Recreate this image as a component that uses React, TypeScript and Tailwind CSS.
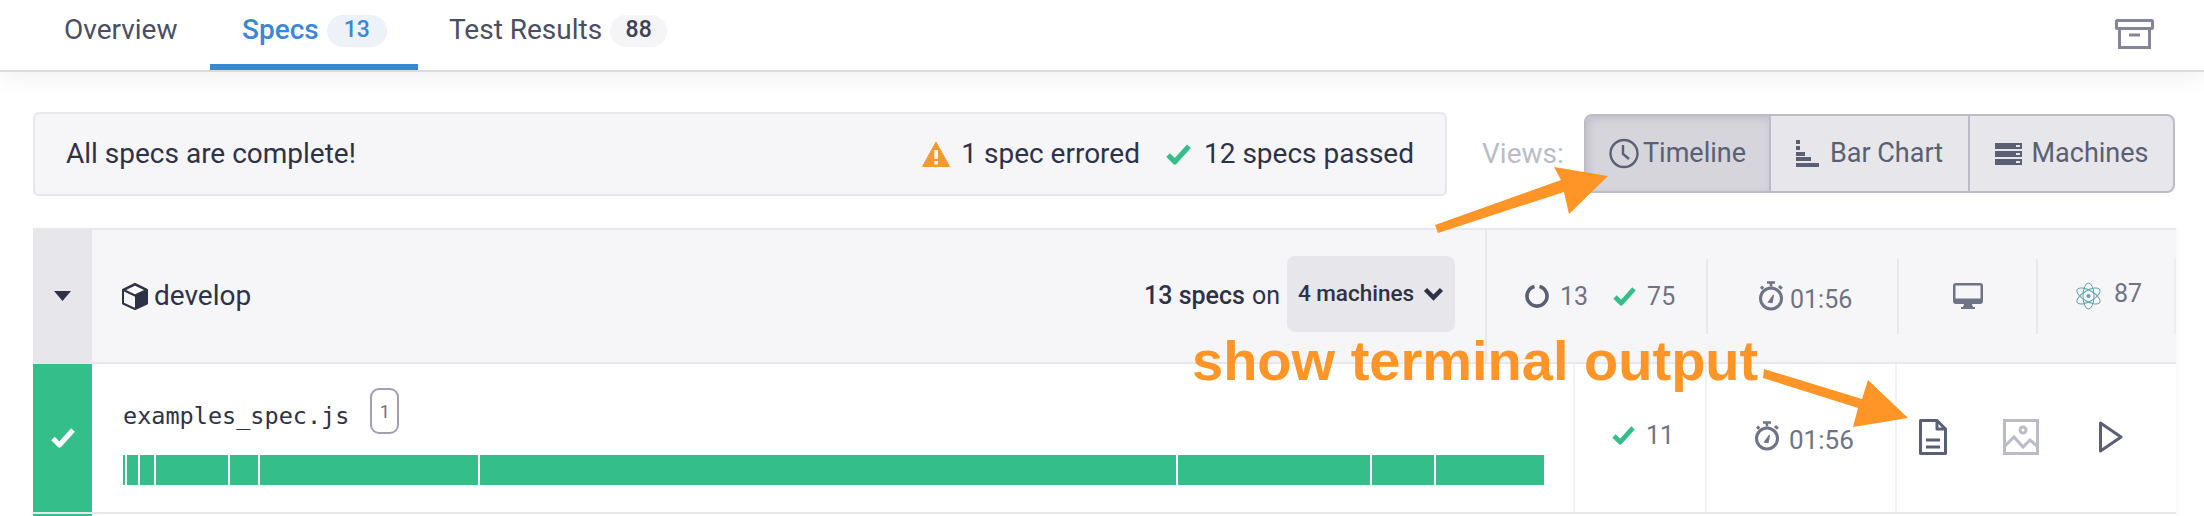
const green = '#34bf8a';

function Check({ className, color = green }: { className?: string; color?: string }) {
  return (
    <svg className={className} viewBox="0 0 24 20" fill="none">
      <path d="M2 10.500 8.500 17 22 2" stroke={color} strokeWidth="5" strokeLinejoin="round" />
    </svg>
  );
}

function Stopwatch({ className }: { className?: string }) {
  return (
    <svg className={className} viewBox="0 0 26 30" fill="none">
      <path d="M9 1.500h8M13 1.500v4" stroke="#6f7386" strokeWidth="2.600" />
      <path d="m21 5 2.800 2.800" stroke="#6f7386" strokeWidth="3" />
      <path d="m3 7.800 2.200-2.200" stroke="#6f7386" strokeWidth="3" />
      <circle cx="13" cy="17.500" r="10.500" stroke="#6f7386" strokeWidth="3" />
      <path d="m10.500 21 5-7-1.500 7.500z" fill="#6f7386" stroke="#6f7386" strokeWidth="1.200" />
    </svg>
  );
}

function StatText({ children, className = '' }: { children: React.ReactNode; className?: string }) {
  return <span className={`leading-none text-[#6f7386] ${className}`}>{children}</span>;
}

function ViewButton({ active, icon, label, width, gap }: { active?: boolean; icon: React.ReactNode; label: string; width: string; gap: string }) {
  return (
    <div className={`${width} ${gap} flex items-center justify-center h-full border-r-2 border-[#bcbcc7] last:border-r-0 text-[27px] text-[#5b5f73] ${active ? 'bg-[#d5d5db] shadow-[inset_3px_3px_8px_rgba(0,0,0,0.1)]' : ''}`}>
      {icon}
      <span>{label}</span>
    </div>
  );
}

const segments = [
  'w-[2px]', 'w-[11px]', 'w-[14px]', 'w-[72px]', 'w-[28px]', 'w-[218px]',
  'w-[696px]', 'w-[192px]', 'w-[62px]', 'w-[108px]',
];

export default function App() {
  return (
    <div className="relative w-[2204px] h-[516px] overflow-hidden bg-white font-['Roboto',sans-serif]">
      <nav className="relative h-[72px] flex border-b-2 border-[#dadae1] shadow-[0_6px_22px_rgba(0,0,0,0.06)] text-[#4a4e62] text-[28px]">
        <div className="flex items-center w-[210px] h-[70px] pl-[64px] pb-[11px]">Overview</div>
        <div className="flex items-center gap-[8px] w-[208px] h-[70px] pl-[32px] pb-[5px] border-b-[6px] border-[#3a87d6] text-[#3a87d6] font-medium">
          <span>Specs</span>
          <span className="w-[60px] h-[32px] mt-[2px] flex items-center justify-center rounded-full bg-[#edf2f9] text-[23px]">13</span>
        </div>
        <div className="flex items-center gap-[8px] pl-[31px] pb-[11px]">
          <span>Test Results</span>
          <span className="w-[57px] h-[32px] mt-[2px] flex items-center justify-center rounded-full bg-[#f5f5f8] text-[23px] font-medium text-[#3d4156]">88</span>
        </div>
        <svg className="ml-auto mr-[50px] mt-[19px] w-[39px] h-[30px]" viewBox="0 0 39 30" fill="none" stroke="#85859a" strokeWidth="3">
          <rect x="1.500" y="1.500" width="36" height="8" rx="1" />
          <path d="M4.500 10v18.500h30V10" />
          <path d="M14 16h11" />
        </svg>
      </nav>

      <main className="pl-[33px] pr-[28px] pt-[40px]">
        <div className="flex items-start">
          <div className="w-[1414px] h-[84px] flex items-center pl-[31px] pr-[31px] rounded-[6px] border-2 border-[#e7e7ec] bg-[#f6f6f9] text-[28px] text-[#2e3247]">
            <span>All specs are complete!</span>
            <svg className="ml-auto w-[28px] h-[26px]" viewBox="0 0 28 26">
              <path d="M14 1 27.500 25.500H.5z" fill="#f7972f" stroke="#f7972f" strokeLinejoin="round" />
              <rect x="12.300" y="9" width="3.600" height="9" fill="#fff" />
              <rect x="12.300" y="20" width="3.600" height="3.400" fill="#fff" />
            </svg>
            <span className="ml-[11px]">1 spec errored</span>
            <Check className="ml-[26px] w-[25px] h-[21px]" />
            <span className="ml-[13px]">12 specs passed</span>
          </div>
          <span className="ml-[35px] mt-[26px] w-[82px] text-[28px] leading-[32px] text-[#bcbcc7]">Views:</span>
          <div className="ml-[20px] mt-[2px] flex w-[591px] h-[79px] overflow-hidden rounded-[8px] border-2 border-[#bcbcc7] bg-[#e6e6eb]">
            <ViewButton
              active
              width="w-[185px]"
              gap="gap-[4px]"
              label="Timeline"
              icon={
                <svg className="w-[30px] h-[31px]" viewBox="0 0 30 31" fill="none" stroke="#5b5f73" strokeWidth="2.400">
                  <circle cx="15" cy="15.500" r="13.500" />
                  <path d="M14 7v9l6 5" />
                </svg>
              }
            />
            <ViewButton
              width="w-[199px]"
              gap="gap-[11px]"
              label="Bar Chart"
              icon={
                <svg className="w-[23px] h-[27px]" viewBox="0 0 23 27" fill="#5b5f73">
                  <rect x="0" y="0" width="4" height="4" />
                  <rect x="0" y="6" width="4" height="4" />
                  <rect x="0" y="12" width="9" height="4" />
                  <rect x="0" y="17" width="15" height="4" />
                  <rect x="0" y="23" width="23" height="4" />
                </svg>
              }
            />
            <ViewButton
              width="flex-1"
              gap="gap-[10px]"
              label="Machines"
              icon={
                <svg className="w-[27px] h-[22px]" viewBox="0 0 27 22" fill="#5b5f73">
                  <path fillRule="evenodd" d="M0 0h27v6H0zM21 2v2h4V2zM0 8h27v6H0zM21 10v2h4v-2zM0 16h27v6H0zM21 18v2h4v-2z" />
                </svg>
              }
            />
          </div>
        </div>

        <section className="mt-[32px] w-[2143px] border-t-2 border-[#e7e7ec] shadow-[2px_0_4px_rgba(0,0,0,0.03)]">
          <div className="flex h-[134px] bg-[#f6f6f9] border-b-2 border-[#e7e7ec]">
            <div className="w-[59px] flex items-center justify-center bg-[#e6e6eb]">
              <svg className="w-[17px] h-[10px]" viewBox="0 0 17 10">
                <path d="M0 0h17L8.500 10z" fill="#2e3247" />
              </svg>
            </div>
            <div className="w-[1395px] flex items-center pl-[30px] pr-[30px] text-[28px] text-[#2e3247] border-r-2 border-[#e7e7ec]">
              <svg className="w-[26px] h-[27px] mr-[6px]" viewBox="0 0 26 27" fill="none">
                <path d="M13 1 25 7v13.500L13 26 1 20.500V7z" stroke="#2e3247" strokeWidth="2" strokeLinejoin="round" />
                <path d="M1.500 7 13 12.500 24.500 7 13 1.500z" fill="#fff" stroke="#2e3247" strokeWidth="2" strokeLinejoin="round" />
                <path d="M13 12.500V26l12-5.500V7z" fill="#2e3247" />
              </svg>
              <span>develop</span>
              <span className="ml-auto text-[25px] font-medium">13 specs</span>
              <span className="ml-[7px] text-[25px]">on</span>
              <div className="ml-[7px] mb-[4px] w-[168px] h-[76px] flex items-center justify-center gap-[9px] rounded-[8px] bg-[#e6e6eb] text-[22.500px] font-medium">
                <span>4 machines</span>
                <svg className="w-[21px] h-[14px]" viewBox="0 0 21 14" fill="none">
                  <path d="M2.500 2.500 10.500 10.500 18.500 2.500" stroke="#2e3247" strokeWidth="4.500" />
                </svg>
              </div>
            </div>
            <div className="w-[219px] flex items-center pl-[38px] text-[25px]">
              <svg className="w-[24px] h-[24px]" viewBox="0 0 24 24" fill="none">
                <path d="M9.500 2.400a10 10 0 1 0 5 0" stroke="#5b5f73" strokeWidth="3.600" />
              </svg>
              <StatText className="ml-[11px]">13</StatText>
              <Check className="ml-[25px] w-[23px] h-[19px]" />
              <StatText className="ml-[11px]">75</StatText>
            </div>
            <div className="w-[191px] h-[75px] self-center flex items-center pl-[50px] border-l-2 border-[#e7e7ec] text-[25px]">
              <Stopwatch className="w-[26px] h-[30px]" />
              <StatText className="ml-[6px] pt-[6px]">01:56</StatText>
            </div>
            <div className="w-[139px] h-[75px] self-center flex items-center pl-[54px] border-l-2 border-[#e7e7ec]">
              <svg className="w-[30px] h-[26px]" viewBox="0 0 30 26">
                <path fillRule="evenodd" d="M3 0h24a3 3 0 0 1 3 3v15a3 3 0 0 1-3 3H19l1 3h2v2H8v-2h2l1-3H3a3 3 0 0 1-3-3V3a3 3 0 0 1 3-3zM2.500 2.500v13h25v-13z" fill="#6f7386" />
              </svg>
            </div>
            <div className="flex-1 h-[75px] self-center flex items-center pl-[36px] border-x-2 border-[#e7e7ec] border-r-[#eeeef2] text-[25px]">
              <svg className="w-[29px] h-[30px]" viewBox="0 0 29 30" fill="none" stroke="#5ea3a8" strokeWidth="1">
                <ellipse cx="14.500" cy="15" rx="13" ry="5.500" transform="rotate(30 14.500 15)" />
                <ellipse cx="14.500" cy="15" rx="13" ry="5.500" transform="rotate(90 14.500 15)" />
                <ellipse cx="14.500" cy="15" rx="13" ry="5.500" transform="rotate(150 14.500 15)" />
                <circle cx="14.500" cy="15" r="1.600" fill="#5ea3a8" />
              </svg>
              <StatText className="ml-[11px] pb-[6px]">87</StatText>
            </div>
          </div>

          <div className="flex h-[150px] border-b-2 border-[#e7e7ec]">
            <div className="w-[59px] flex items-center justify-center bg-[#34bf8a]">
              <Check className="w-[24px] h-[20px]" color="#fff" />
            </div>
            <div className="w-[1483px] pl-[31px] pt-[24px] border-r-2 border-[#f2f2f5]">
              <div className="flex items-center h-[46px]">
                <span className="mt-[12px] font-['DejaVu_Sans_Mono',monospace] text-[23.500px] text-[#2e3247]">examples_spec.js</span>
                <span className="ml-[21px] w-[29px] h-[46px] flex items-center justify-center rounded-[9px] border-2 border-[#a0a0b0] text-[18px] text-[#6f7386]">1</span>
              </div>
              <div className="mt-[21px] flex gap-[2px]">
                {segments.map((w, i) => (
                  <div key={i} className={`${w} h-[30px] bg-[#34bf8a]`} />
                ))}
              </div>
            </div>
            <div className="w-[132px] flex items-center pl-[37px] pb-[6px] border-r-2 border-[#f2f2f5] text-[25px]">
              <Check className="w-[23px] h-[19px]" />
              <StatText className="ml-[11px]">11</StatText>
            </div>
            <div className="w-[190px] flex items-center pl-[47px] pb-[2px] border-r-2 border-[#f2f2f5] text-[26px]">
              <Stopwatch className="w-[26px] h-[30px] mb-[2px]" />
              <StatText className="ml-[9px] pt-[6px]">01:56</StatText>
            </div>
            <div className="flex-1 flex items-center pl-[22px] pb-[2px]">
              <svg className="w-[28px] h-[36px]" viewBox="0 0 28 36" fill="none" stroke="#5b5f73" strokeWidth="3" strokeLinejoin="round">
                <path d="M1.500 1.500H18L26.500 10v24.500h-25z" />
                <path d="M18 1.500V10h8.500" />
                <path d="M7 21h14M7 28h14" />
              </svg>
              <svg className="ml-[56px] w-[36px] h-[36px]" viewBox="0 0 36 36" fill="none" stroke="#bcbcc7" strokeWidth="3">
                <rect x="1.500" y="1.500" width="33" height="33" />
                <circle cx="20" cy="11" r="3" />
                <path d="M2 27l9-9 9 10 7-7 8 7" />
              </svg>
              <svg className="ml-[60px] w-[24px] h-[32px]" viewBox="0 0 24 32" fill="none" stroke="#5b5f73" strokeWidth="3" strokeLinejoin="round">
                <path d="M1.500 2 22 16 1.500 30z" />
              </svg>
            </div>
          </div>
          <div className="w-[59px] h-[10px] bg-[#34bf8a]" />
        </section>
      </main>

      <span className="absolute left-[1192px] top-[329px] font-['Liberation_Sans',sans-serif] font-bold text-[56px] leading-[64px] text-[#ff9526] whitespace-nowrap">show terminal output</span>

      <svg className="absolute inset-0 w-[2204px] h-[516px] pointer-events-none" viewBox="0 0 2204 516" fill="#ff9526">
        <polygon points="1435,225 1561,180 1554,167 1608,176 1569,214 1564,192 1438,233" />
        <polygon points="1764,369 1862,399 1868,380 1908,418 1853,427 1858,408 1763,378" />
      </svg>
    </div>
  );
}
